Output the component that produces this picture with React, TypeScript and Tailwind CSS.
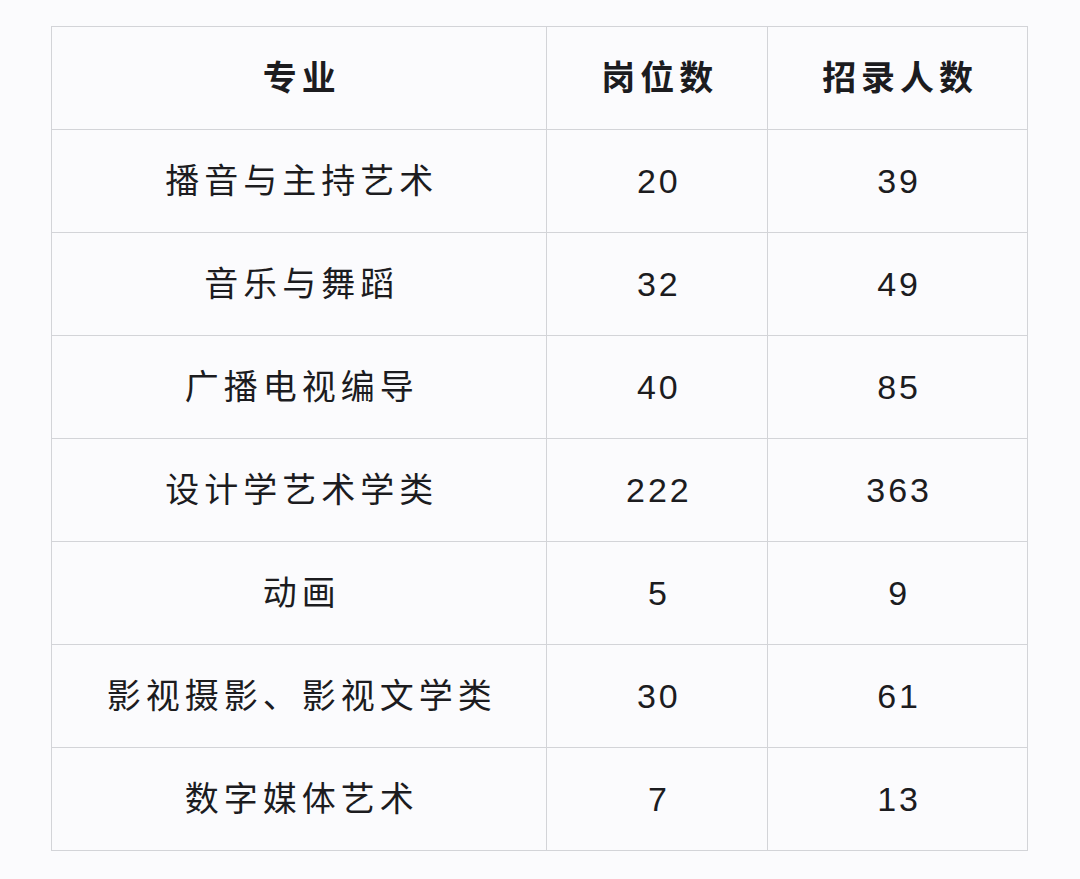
import React from 'react';

const rows: [string, string, string][] = [
  ['播音与主持艺术', '20', '39'],
  ['音乐与舞蹈', '32', '49'],
  ['广播电视编导', '40', '85'],
  ['设计学艺术学类', '222', '363'],
  ['动画', '5', '9'],
  ['影视摄影、影视文学类', '30', '61'],
  ['数字媒体艺术', '7', '13'],
];

const cell = 'border border-[#d3d4d8] text-center align-middle h-[103px] p-0';
const text = cell + ' pl-[5px] tracking-[5px]';
const num = cell + ' pl-[3px] tracking-[3px]';

export default function App() {
  return (
    <div
      className="min-h-[879px] w-[1080px] bg-[#fbfbfd] pt-[26px] pl-[51px]"
      style={{ fontFamily: '"Liberation Sans", "Noto Sans CJK SC", sans-serif' }}
    >
      <table className="border-collapse w-[977px] text-[34px] text-[#1c1c1f]">
        <colgroup>
          <col className="w-[496px]" />
          <col className="w-[221px]" />
          <col className="w-[260px]" />
        </colgroup>
        <thead>
          <tr>
            <th className={text + ' font-bold'}>专业</th>
            <th className={text + ' font-bold'}>岗位数</th>
            <th className={text + ' font-bold'}>招录人数</th>
          </tr>
        </thead>
        <tbody>
          {rows.map(([name, posts, hires]) => (
            <tr key={name}>
              <td className={text}>{name}</td>
              <td className={num}>{posts}</td>
              <td className={num}>{hires}</td>
            </tr>
          ))}
        </tbody>
      </table>
    </div>
  );
}
